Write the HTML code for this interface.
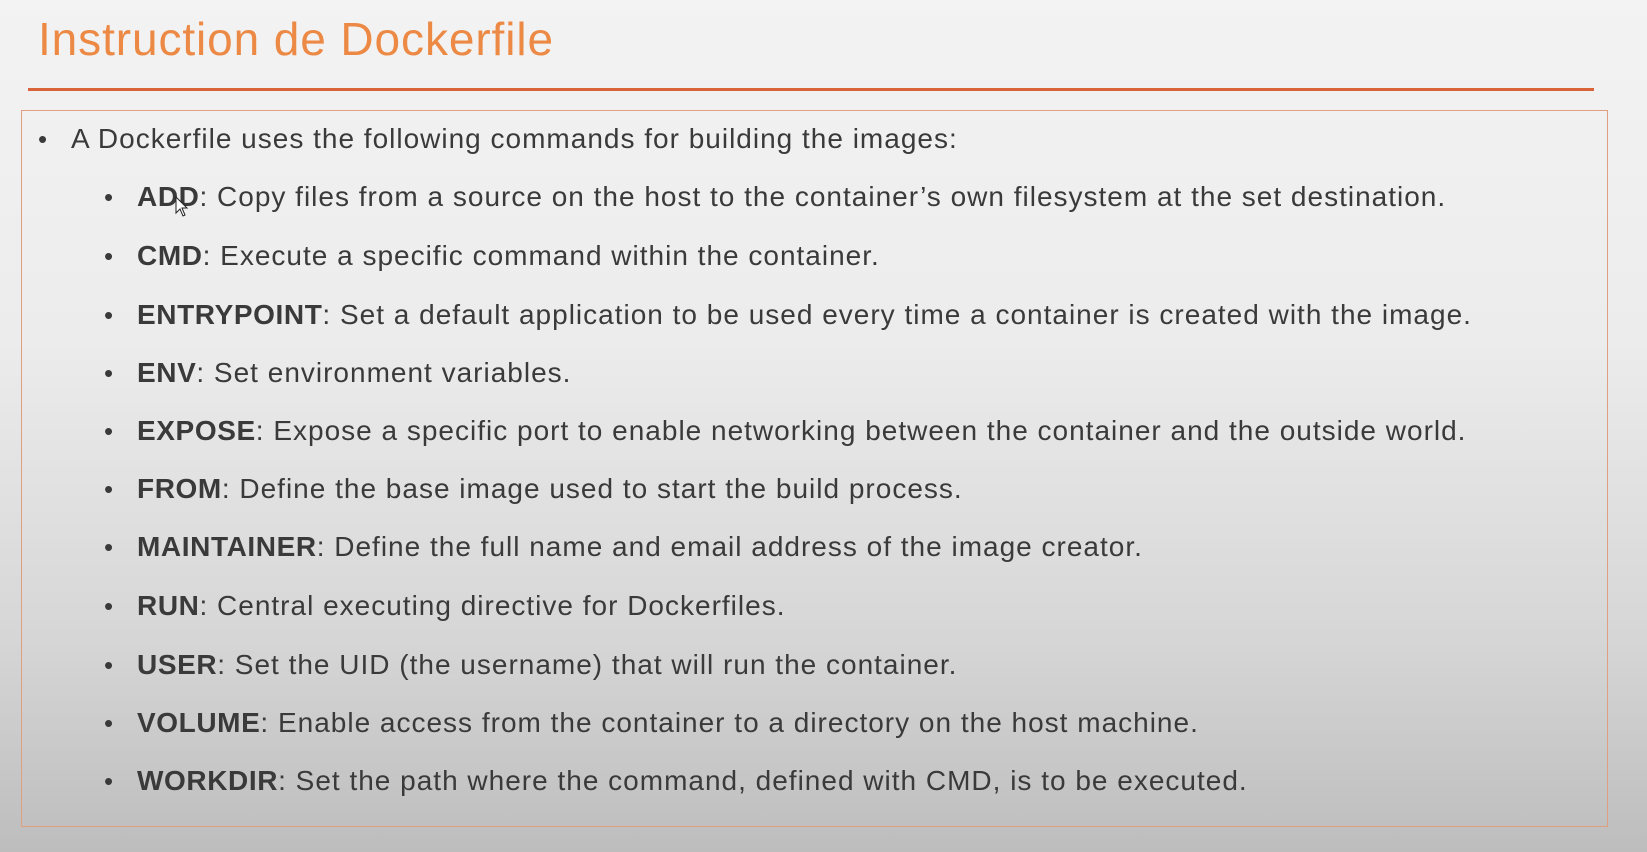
<!DOCTYPE html>
<html><head><meta charset="utf-8"><style>
html,body{margin:0;padding:0}
body{width:1647px;height:852px;overflow:hidden;background:linear-gradient(#f3f3f3 0%,#ececec 40%,#d6d6d6 75%,#bdbdbd 100%);font-family:"Liberation Sans",sans-serif;position:relative}
.title{position:absolute;left:38px;top:12px;font-size:46px;color:#ec8a45;letter-spacing:0.9px}
.rule{position:absolute;left:28px;top:88px;width:1566px;height:3px;background:#d9643a}
.box{position:absolute;left:21px;top:110px;width:1587px;height:717px;border:1.5px solid #e0a080;box-sizing:border-box}
.l{position:absolute;font-size:28px;color:#3a3a3a;white-space:nowrap;letter-spacing:1px}
.l b{letter-spacing:0.6px}
.b{position:absolute;font-size:26px;color:#3a3a3a}
b{font-weight:bold}
</style></head><body>
<div class="title">Instruction de Dockerfile</div>
<div class="rule"></div>
<div class="box"></div>
<div class="b" style="left:38px;top:124px">•</div>
<div class="l" style="left:71px;top:123px">A Dockerfile uses the following commands for building the images:</div>
<div class="b" style="left:104px;top:182px">•</div><div class="l" style="left:137px;top:181px"><b>ADD</b>: Copy files from a source on the host to the container’s own filesystem at the set destination.</div>
<div class="b" style="left:104px;top:241px">•</div><div class="l" style="left:137px;top:240px"><b>CMD</b>: Execute a specific command within the container.</div>
<div class="b" style="left:104px;top:300px">•</div><div class="l" style="left:137px;top:299px"><b>ENTRYPOINT</b>: Set a default application to be used every time a container is created with the image.</div>
<div class="b" style="left:104px;top:358px">•</div><div class="l" style="left:137px;top:357px"><b>ENV</b>: Set environment variables.</div>
<div class="b" style="left:104px;top:416px">•</div><div class="l" style="left:137px;top:415px"><b>EXPOSE</b>: Expose a specific port to enable networking between the container and the outside world.</div>
<div class="b" style="left:104px;top:474px">•</div><div class="l" style="left:137px;top:473px"><b>FROM</b>: Define the base image used to start the build process.</div>
<div class="b" style="left:104px;top:532px">•</div><div class="l" style="left:137px;top:531px"><b>MAINTAINER</b>: Define the full name and email address of the image creator.</div>
<div class="b" style="left:104px;top:591px">•</div><div class="l" style="left:137px;top:590px"><b>RUN</b>: Central executing directive for Dockerfiles.</div>
<div class="b" style="left:104px;top:650px">•</div><div class="l" style="left:137px;top:649px"><b>USER</b>: Set the UID (the username) that will run the container.</div>
<div class="b" style="left:104px;top:708px">•</div><div class="l" style="left:137px;top:707px"><b>VOLUME</b>: Enable access from the container to a directory on the host machine.</div>
<div class="b" style="left:104px;top:766px">•</div><div class="l" style="left:137px;top:765px"><b>WORKDIR</b>: Set the path where the command, defined with CMD, is to be executed.</div>
<svg style="position:absolute;left:175px;top:196px" width="14" height="22" viewBox="0 0 14 22"><path d="M1 1 L1 17 L5 13 L8 20 L10 19 L7 12 L12 12 Z" fill="#fff" stroke="#222" stroke-width="1"/></svg>
</body></html>
